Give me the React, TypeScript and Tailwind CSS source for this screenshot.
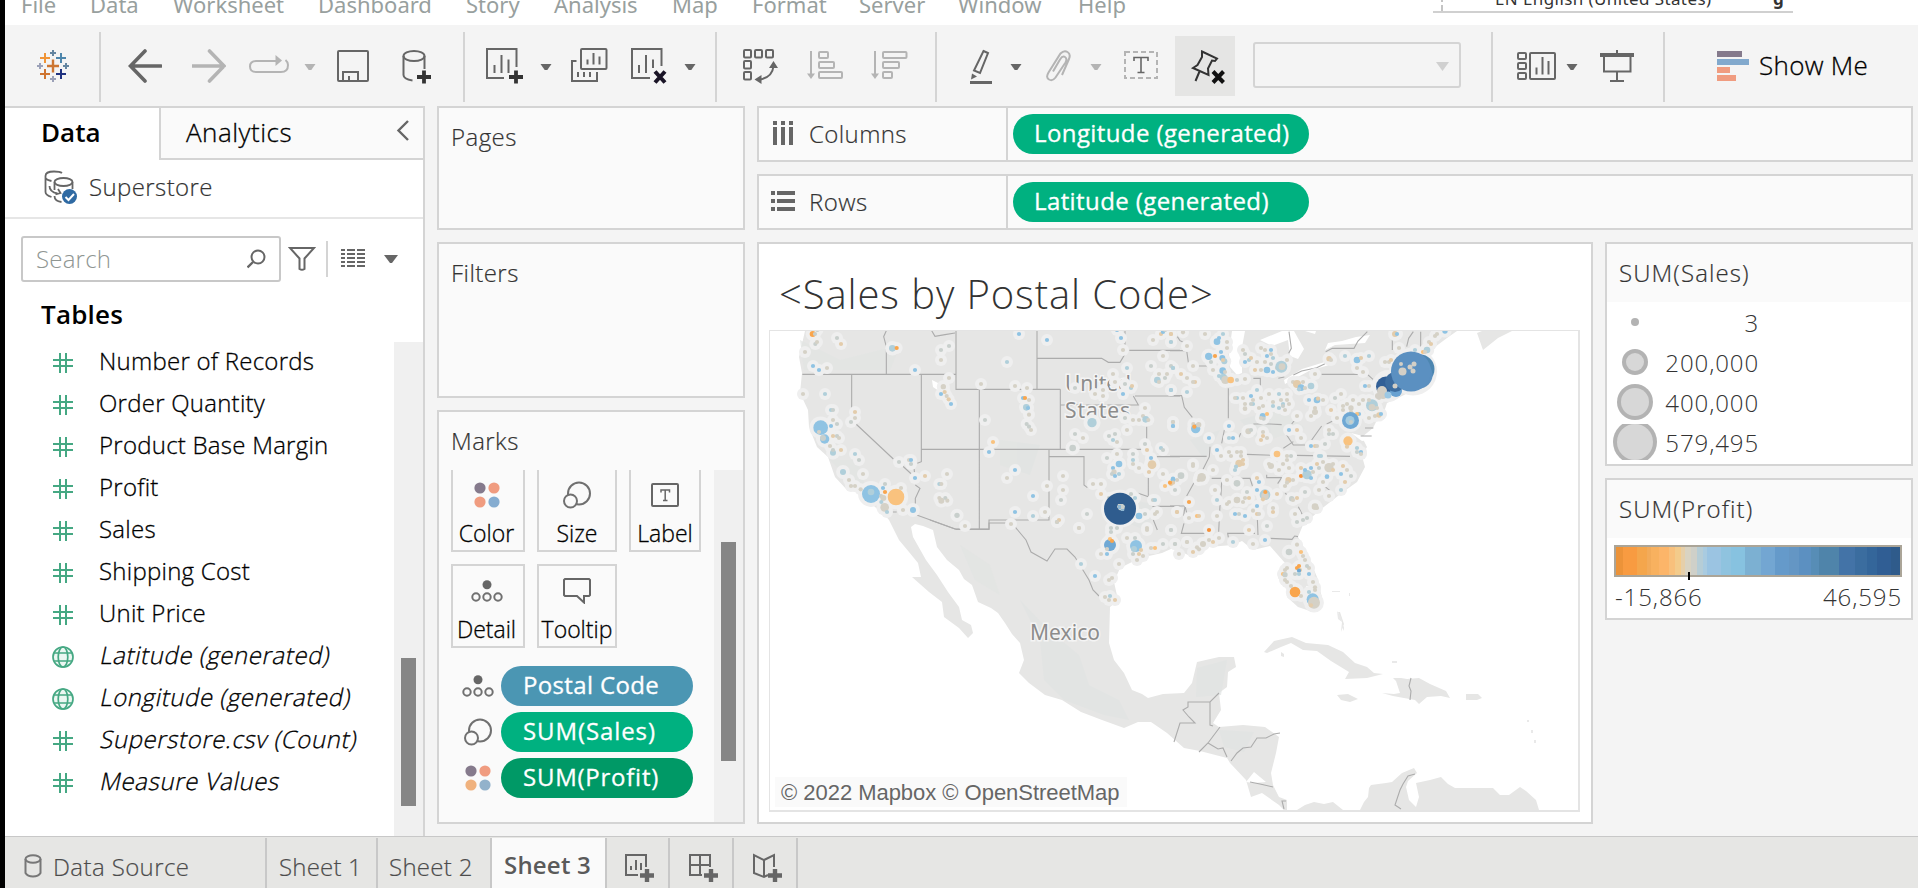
import type { ReactNode } from "react";

type IconProps = { x: number; y: number; w: number; h: number; className?: string; children: ReactNode };

function Icon({ x, y, w, h, className = "", children }: IconProps) {
  return (
    <svg
      width={w}
      height={h}
      viewBox={`${x} ${y} ${w} ${h}`}
      fill="none"
      stroke="#666"
      strokeWidth="2"
      className={`shrink-0 ${className}`}
    >
      {children}
    </svg>
  );
}

function Caret({ className = "", color = "#666" }: { className?: string; color?: string }) {
  return (
    <svg width="12" height="40" viewBox="0 0 12 40" className={`shrink-0 ${className}`}>
      <path d="M0.5 18h11l-4.2 6h-2.6z" fill={color} />
    </svg>
  );
}

function Rule({ className = "" }: { className?: string }) {
  return <div className={`-mt-[14px] h-[70px] w-[2px] shrink-0 bg-[#d4d4d4] ${className}`} />;
}

function MenuBar() {
  return (
    <div className="flex h-[25px] shrink-0 overflow-hidden bg-white text-[#98a09e]">
      <div className="-mt-[12px] flex h-[32px] text-[22px] leading-[32px] whitespace-nowrap font-['Noto_Sans',sans-serif]">
        <span className="ml-[16px] w-[69px]">File</span>
        <span className="w-[83px]">Data</span>
        <span className="w-[145px]">Worksheet</span>
        <span className="w-[148px]">Dashboard</span>
        <span className="w-[88px]">Story</span>
        <span className="w-[118px]">Analysis</span>
        <span className="w-[80px]">Map</span>
        <span className="w-[107px]">Format</span>
        <span className="w-[99px]">Server</span>
        <span className="w-[120px]">Window</span>
        <span className="w-[60px]">Help</span>
      </div>
      <div className="ml-[295px] h-[13px] w-[360px] overflow-hidden border-b-2 border-[#d0d0d0]">
        <div className="-mt-[13px] ml-[8px] flex h-[24px] border-l-2 border-dashed border-[#c4c4c4] text-[17px] leading-[24px] text-[#333] font-['Noto_Sans',sans-serif]">
          <span className="ml-[52px] w-[278px] tracking-[0.4px] whitespace-nowrap">EN English (United States)</span>
          <span className="font-bold">g</span>
        </div>
      </div>
    </div>
  );
}

function Plus({ x, y, c }: { x: number; y: number; c: string }) {
  return <path d={`M${x - 5} ${y}h10M${x} ${y - 5}v10`} stroke={c} strokeWidth="2" />;
}

function Toolbar() {
  return (
    <div className="flex h-[81px] shrink-0 items-start bg-[#f4f4f4] pt-[21px]">
      <Icon x={36} y={46} w={34} h={40} className="ml-[31px]">
        <path d="M47 66h12M53 59.5v13" stroke="#cd7632" strokeWidth="2.4" />
        <Plus x={45} y={58} c="#f09436" />
        <Plus x={61} y={58} c="#4d86ac" />
        <Plus x={45} y={74} c="#cf7430" />
        <Plus x={61} y={74} c="#1f3180" />
        <path d="M50 53h6M53 50v6M63 66h6M66 63v6" stroke="#6485a0" />
        <path d="M50 79h6M53 76v6M37 66h6M40 63v6" stroke="#9ba1b8" />
      </Icon>
      <Rule className="ml-[29px]" />
      <Icon x={128} y={46} w={34} h={40} className="ml-[27px]">
        <path d="M145 51 130.500 66l14.500 15M130.500 66H161" strokeWidth="3.600" strokeLinecap="round" />
      </Icon>
      <Icon x={192} y={46} w={34} h={40} className="ml-[30px]">
        <path d="M209.500 51l14.500 15-14.500 15M224 66h-31.500" stroke="#b4b4b4" strokeWidth="3.600" strokeLinecap="round" />
      </Icon>
      <Icon x={248} y={46} w={42} h={40} className="ml-[22px]">
        <path d="M278 61H256q-6 0-6 5.500t6 5.500h25q7 0 7-7 0-3-2.500-5" stroke="#b4b4b4" />
        <path d="M275.500 55l6.500 5.500-6.500 5.500z" fill="#b4b4b4" stroke="none" />
      </Icon>
      <Caret className="ml-[14px]" color="#b4b4b4" />
      <Icon x={336} y={46} w={34} h={40} className="ml-[20px]">
        <rect x="338" y="51" width="30" height="30" rx="1" />
        <path d="M343 81v-9h15v9M349 81v-5" />
      </Icon>
      <Icon x={402} y={46} w={30} h={40} className="ml-[32px]">
        <ellipse cx="414" cy="56" rx="10.500" ry="5" />
        <path d="M403.500 56v19q0 4 9 5.500M424.500 56v13" />
        <path d="M424 70.500v13M417 77h14" stroke="#333" strokeWidth="3.800" />
      </Icon>
      <Rule className="ml-[31px]" />
      <Icon x={485} y={46} w={40} h={40} className="ml-[20px]">
        <path d="M504 78h-17V49h29.500v18M494.500 73v-8M501.500 73V55M508.500 73V59.500" />
        <path d="M516 70.500v13M509 77h14" stroke="#333" strokeWidth="3.800" />
      </Icon>
      <Caret className="ml-[15px]" />
      <Icon x={570} y={46} w={38} h={40} className="ml-[18px]">
        <rect x="581" y="49" width="25.500" height="20" rx="1" />
        <path d="M587.500 64.500v-5M593.500 64.500V53M599.500 64.500V56.500M576.500 61H572v20h25v-9M578 77v-5M584 77v-5M590 77v-5" />
      </Icon>
      <Icon x={630} y={46} w={40} h={40} className="ml-[22px]">
        <path d="M650 78h-18V49h29.500v17M639 73v-8M646 73V55M653 68V59.500" />
        <path d="M655 71.500l10 11M665 71.500l-10 11" stroke="#1a1426" strokeWidth="4" />
      </Icon>
      <Caret className="ml-[14px]" />
      <Rule className="ml-[19px]" />
      <Icon x={742} y={46} w={38} h={40} className="ml-[25px]">
        <rect x="744" y="50" width="7" height="7.500" rx="1" />
        <rect x="755" y="50" width="7" height="7.500" rx="1" />
        <rect x="766" y="50" width="7" height="7.500" rx="1" />
        <rect x="744" y="61" width="7" height="7.500" rx="1" />
        <rect x="744" y="72" width="7" height="7.500" rx="1" />
        <path d="M773.500 66q-1 11-13 13.500" />
        <path d="M773.500 61l-4.500 7h9zM754.500 79.500l7-4.500v9z" fill="#666" stroke="none" />
      </Icon>
      <Icon x={806} y={46} w={38} h={40} className="ml-[26px]">
        <g stroke="#b4b4b4">
          <path d="M811 51v24" />
          <path d="M807 73.500h8l-4 5.500z" fill="#b4b4b4" stroke="none" />
          <rect x="819" y="52" width="9" height="6" rx="1" />
          <rect x="819" y="62" width="15" height="6" rx="1" />
          <rect x="819" y="72" width="23" height="6" rx="1" />
        </g>
      </Icon>
      <Icon x={870} y={46} w={38} h={40} className="ml-[26px]">
        <g stroke="#b4b4b4">
          <path d="M875 51v24" />
          <path d="M871 73.500h8l-4 5.500z" fill="#b4b4b4" stroke="none" />
          <rect x="883" y="52" width="23.500" height="6" rx="1" />
          <rect x="883" y="62" width="16" height="6" rx="1" />
          <rect x="883" y="72" width="9" height="6" rx="1" />
        </g>
      </Icon>
      <Rule className="ml-[27px]" />
      <Icon x={969} y={46} w={24} h={40} className="ml-[32px]">
        <path d="M983.500 51l4.500 2-8 20-6-2.500z" />
        <path d="M972 73.500l5 3-6 3zM970 81h22v3h-22z" fill="#666" stroke="none" />
      </Icon>
      <Caret className="ml-[17px]" />
      <Icon x={1045} y={46} w={26} h={40} className="ml-[23px]">
        <path
          d="M1062 75l7-16q2-5-1.500-7t-7 1.500l-12 19q-3 5 .5 7t6.500-2l10-15q2-4-.5-5.500t-5 2.500l-7 12"
          stroke="#b4b4b4"
        />
      </Icon>
      <Caret className="ml-[19px]" color="#b4b4b4" />
      <Icon x={1123} y={46} w={36} h={40} className="ml-[21px]">
        <rect x="1125" y="52" width="32" height="26" stroke="#b4b4b4" strokeDasharray="5 3" />
        <path d="M1134 61v-3.500h14v3.500M1141 57.500v15M1137.500 72.500h7" strokeWidth="1.600" />
      </Icon>
      <div className="-mt-[10px] ml-[16px] h-[60px] w-[60px] shrink-0 bg-[#e5e5e4] pt-[10px]">
        <Icon x={1175} y={46} w={60} h={40}>
          <path
            d="M1202 51.500l15 7-2 2.500-3-.5-4 8 .5 6.500-15.500-7 4.500-3 4.500-8zM1199.500 71.500l-4 9.500"
            stroke="#333"
          />
          <path d="M1213 71.500l10.500 11M1223.500 71.500l-10.500 11" stroke="#111" strokeWidth="4" />
        </Icon>
      </div>
      <div className="-mt-[4px] ml-[18px] flex h-[46px] w-[208px] shrink-0 justify-end rounded-[3px] border-2 border-[#d4d4d4] pr-[9px]">
        <svg width="15" height="42" viewBox="0 0 15 42">
          <path d="M1 18h13l-6.500 9z" fill="#d0d0d0" />
        </svg>
      </div>
      <Rule className="ml-[30px]" />
      <Icon x={1516} y={46} w={42} h={40} className="ml-[23px]">
        <rect x="1518" y="53" width="8" height="6" rx="1" />
        <rect x="1518" y="63" width="8" height="6" rx="1" />
        <rect x="1518" y="73" width="8" height="6" rx="1" />
        <rect x="1530" y="53" width="25" height="26" rx="1" />
        <path d="M1536.500 74.500v-7M1542.500 74.500V57M1548.500 74.500V61" />
      </Icon>
      <Caret className="ml-[8px]" />
      <Icon x={1599} y={46} w={36} h={40} className="ml-[21px]">
        <path d="M1600 53h34v4h-34zM1616 50h2v4h-2z" fill="#666" stroke="none" />
        <path d="M1604 56v15.500h26.500V56M1617 72v8M1610 81h14" />
      </Icon>
      <Rule className="ml-[28px]" />
      <Icon x={1717} y={46} w={33} h={40} className="ml-[52px]">
        <path d="M1717 51h25v6h-25z" fill="#857a8c" stroke="none" />
        <path d="M1717 59h32v6h-32z" fill="#82a9cd" stroke="none" />
        <path d="M1717 67h13v6h-13zM1717 75h19v6h-19z" fill="#f09c80" stroke="none" />
      </Icon>
      <span className="ml-[9px] text-[26px] leading-[38px] font-[350] tracking-[0.3px] whitespace-nowrap text-black [-webkit-text-stroke:0.3px]">
        Show Me
      </span>
    </div>
  );
}

function HashIcon() {
  return (
    <svg width="22" height="22" viewBox="0 0 22 22" stroke="#45a883" strokeWidth="2">
      <path d="M1 8h20M1 14h20M8 1v20M14 1v20" />
    </svg>
  );
}

function GlobeIcon() {
  return (
    <svg width="22" height="22" viewBox="0 0 22 22" stroke="#45a883" strokeWidth="1.700" fill="none">
      <circle cx="11" cy="11" r="10" fill="#ecf7f2" />
      <ellipse cx="11" cy="11" rx="4.800" ry="10" />
      <path d="M2 7h18M2 15h18" />
    </svg>
  );
}

const fields: { name: string; geo?: boolean; generated?: boolean }[] = [
  { name: "Number of Records" },
  { name: "Order Quantity" },
  { name: "Product Base Margin" },
  { name: "Profit" },
  { name: "Sales" },
  { name: "Shipping Cost" },
  { name: "Unit Price" },
  { name: "Latitude (generated)", geo: true, generated: true },
  { name: "Longitude (generated)", geo: true, generated: true },
  { name: "Superstore.csv (Count)", generated: true },
  { name: "Measure Values", generated: true },
];

function DataPane() {
  return (
    <div className="flex h-[730px] w-[420px] shrink-0 flex-col border-t-2 border-r-2 border-[#d4d4d4] bg-white">
      <div className="flex h-[52px] shrink-0">
        <div className="w-[154px] pl-[36px] text-[26px] leading-[48px] font-semibold text-black">Data</div>
        <div className="flex grow justify-between border-b-2 border-l-2 border-[#d4d4d4] bg-[#fafafa] pl-[25px] text-[26px] leading-[49px] font-[350] tracking-[0.5px] text-black [-webkit-text-stroke:0.3px]">
          Analytics
          <Icon x={394} y={118} w={16} h={24} className="mt-[10px] mr-[12px]">
            <path d="M407 121l-9.500 9.500 9.500 9.500" strokeWidth="2.400" />
          </Icon>
        </div>
      </div>
      <div className="flex h-[59px] shrink-0 items-start border-b-2 border-[#e6e6e6]">
        <Icon x={43} y={170} w={36} h={36} className="mt-[10px] ml-[38px]">
          <path d="M62 173q-2-1.500-8-1.500-8.500 0-8.500 4.500v16q0 3 6 5M45.500 178q1 2 6 3M49.500 186q0 6 8 7.500M58 189l2.500 4-5 1.500" strokeWidth="1.800" />
          <ellipse cx="63.500" cy="182" rx="9" ry="4" strokeWidth="1.800" />
          <path d="M54.500 182v8M72.500 182v7M54.500 196q0 5 7 6" strokeWidth="1.800" />
          <circle cx="69.500" cy="196.500" r="7.500" fill="#2f6aa3" stroke="none" />
          <path d="M65.500 197l3 3 5.500-6" stroke="#fff" strokeWidth="2" />
        </Icon>
        <span className="ml-[10px] text-[24px] leading-[54px] font-[350] tracking-[0.4px] text-[#333] [-webkit-text-stroke:0.2px]">
          Superstore
        </span>
      </div>
      <div className="mt-[17px] flex h-[46px] shrink-0 items-center">
        <div className="ml-[16px] flex h-[46px] w-[260px] items-center justify-between rounded-[3px] border-2 border-[#c8c8c8] pr-[12px] pl-[13px]">
          <span className="text-[24px] leading-[40px] font-light tracking-[0.2px] text-[#8f9693]">Search</span>
          <Icon x={248} y={249} w={20} h={20}>
            <circle cx="259" cy="257" r="6.500" />
            <path d="M254 262l-5.500 5.500" strokeWidth="2.400" />
          </Icon>
        </div>
        <Icon x={288} y={244} w={28} h={28} className="ml-[7px]">
          <path d="M290 247h24l-9.500 10.500V268q-2.500 1.500-5 0v-10.500z" />
        </Icon>
        <div className="ml-[10px] h-[36px] w-[2px] bg-[#d4d4d4]" />
        <svg width="24" height="18" viewBox="0 0 24 18" className="-mt-[2px] ml-[13px]" stroke="#666" strokeWidth="2">
          <path d="M0 1h4M6 1h8M16 1h8M0 5h4M6 5h8M16 5h8M0 9h4M6 9h8M16 9h8M0 13h4M6 13h8M16 13h8M0 17h4M6 17h8M16 17h8" />
        </svg>
        <svg width="14" height="8" viewBox="0 0 14 8" className="-mt-[1px] ml-[19px]">
          <path d="M0 0h14L8 8H6z" fill="#666" />
        </svg>
      </div>
      <div className="h-[60px] shrink-0 pl-[36px] text-[26px] leading-[65px] font-semibold tracking-[0.2px] text-black">Tables</div>
      <div className="flex grow">
        <div className="w-[389px] shrink-0">
          {fields.map((f) => (
            <div key={f.name} className="flex h-[42px] items-center">
              <span className="ml-[47px] w-[22px]">{f.geo ? <GlobeIcon /> : <HashIcon />}</span>
              <span
                className={`-mt-[5px] text-[24px] leading-[39px] font-[350] whitespace-nowrap text-black [-webkit-text-stroke:0.3px] ${f.generated ? "ml-[27px] inline-block -skew-x-12 tracking-[0.6px]" : "ml-[25px] tracking-[0.25px]"}`}
              >
                {f.name}
              </span>
            </div>
          ))}
        </div>
        <div className="grow bg-[#f0f0f0] pt-[316px] pl-[7px]">
          <div className="h-[148px] w-[15px] bg-[#868686]" />
        </div>
      </div>
    </div>
  );
}

function ColorDots({ third = "#f09c80", fourth = "#85acd0" }: { third?: string; fourth?: string }) {
  return (
    <svg width="26" height="26" viewBox="0 0 26 26">
      <circle cx="6" cy="6" r="5.600" fill="#857a8c" />
      <circle cx="20" cy="6" r="5.600" fill="#f09c80" />
      <circle cx="6" cy="20" r="5.600" fill={third} />
      <circle cx="20" cy="20" r="5.600" fill={fourth} />
    </svg>
  );
}

function SizeIcon() {
  return (
    <svg width="28" height="28" viewBox="0 0 28 28" fill="#fafafa" stroke="#707070" strokeWidth="2">
      <circle cx="16" cy="12.500" r="11" />
      <circle cx="7.500" cy="20" r="6.500" />
    </svg>
  );
}

function DetailIcon() {
  return (
    <svg width="32" height="22" viewBox="0 0 32 22" fill="none" stroke="#707070" strokeWidth="2">
      <circle cx="16" cy="4.700" r="4.500" fill="#666" stroke="none" />
      <circle cx="5" cy="17" r="3.700" />
      <circle cx="16" cy="17" r="3.700" />
      <circle cx="27" cy="17" r="3.700" />
    </svg>
  );
}

function LabelIcon() {
  return (
    <svg width="28" height="24" viewBox="0 0 28 24" fill="none" stroke="#666" strokeWidth="2">
      <rect x="1" y="1" width="26" height="22" rx="1" />
      <path d="M10 9.500V7h8.500v2.500M14.200 7v10.500M12 17.500h4.500" strokeWidth="1.500" />
    </svg>
  );
}

function TooltipIcon() {
  return (
    <svg width="28" height="26" viewBox="0 0 28 26" fill="none" stroke="#666" strokeWidth="2">
      <path d="M2 1h24l1 1v15l-1 1h-5v6.500l-7-6.500H2l-1-1V2z" />
    </svg>
  );
}

function MarkButton({ icon, label, className }: { icon: ReactNode; label: string; className: string }) {
  return (
    <div className={`flex flex-col items-center border-2 border-[#d4d4d4] ${className}`}>
      <div className="flex h-[30px] items-center">{icon}</div>
      <span className="mt-[7px] text-[23px] leading-[32px] font-[350] whitespace-nowrap text-black [-webkit-text-stroke:0.3px]">
        {label}
      </span>
    </div>
  );
}

function MarkRow({ icon, label, className }: { icon: ReactNode; label: string; className: string }) {
  return (
    <div className="flex h-[40px] items-center">
      <div className="flex w-[62px] shrink-0 justify-center pl-[16px]">{icon}</div>
      <div
        className={`h-[40px] w-[192px] rounded-full pl-[22px] text-[24px] leading-[38px] font-[450] whitespace-nowrap text-white [-webkit-text-stroke:0.3px] ${className}`}
      >
        {label}
      </div>
    </div>
  );
}

function Cards() {
  const title = "pl-[12px] text-[24px] leading-[58px] font-[350] tracking-[0.45px] text-[#333] [-webkit-text-stroke:0.2px]";
  return (
    <div className="ml-[12px] flex w-[308px] shrink-0 flex-col gap-[12px]">
      <div className={`h-[124px] border-2 border-[#d4d4d4] bg-[#fafafa] ${title}`}>Pages</div>
      <div className={`h-[156px] border-2 border-[#d4d4d4] bg-[#fafafa] ${title}`}>Filters</div>
      <div className="flex h-[414px] flex-col border-2 border-[#d4d4d4] bg-[#fafafa]">
        <div className={`h-[58px] shrink-0 ${title}`}>Marks</div>
        <div className="flex grow">
          <div className="w-[275px] shrink-0">
            <div className="flex pl-[12px]">
              <MarkButton className="h-[82px] w-[74px] border-t-0 pt-[10px] pr-[3px]" icon={<ColorDots />} label="Color" />
              <MarkButton className="ml-[12px] h-[82px] w-[80px] border-t-0 pt-[10px]" icon={<SizeIcon />} label="Size" />
              <MarkButton className="ml-[12px] h-[82px] w-[72px] border-t-0 pt-[10px]" icon={<LabelIcon />} label="Label" />
            </div>
            <div className="mt-[12px] flex pl-[12px]">
              <MarkButton className="h-[84px] w-[74px] pt-[10px] pr-[3px]" icon={<DetailIcon />} label="Detail" />
              <MarkButton className="ml-[12px] h-[84px] w-[80px] pt-[10px]" icon={<TooltipIcon />} label="Tooltip" />
            </div>
            <div className="mt-[18px] flex flex-col gap-[6px]">
              <MarkRow icon={<DetailIcon />} label="Postal Code" className="bg-[#4b96b3] tracking-[0.35px]" />
              <MarkRow icon={<SizeIcon />} label="SUM(Sales)" className="bg-[#00b180] tracking-[0.9px]" />
              <MarkRow icon={<ColorDots third="#f0b27e" fourth="#92b2cb" />} label="SUM(Profit)" className="bg-[#009966] tracking-[0.75px]" />
            </div>
          </div>
          <div className="grow bg-[#f0f0f0] pt-[72px] pl-[7px]">
            <div className="h-[219px] w-[15px] bg-[#868686]" />
          </div>
        </div>
      </div>
    </div>
  );
}

function Shelf({ icon, label, pill }: { icon: ReactNode; label: string; pill: string }) {
  return (
    <div className="flex h-[56px] shrink-0 border-2 border-[#d4d4d4] bg-[#fafafa]">
      <div className="flex w-[249px] shrink-0 items-center border-r-2 border-[#d4d4d4] pl-[11px]">
        {icon}
        <span className="ml-[13px] text-[24px] leading-[48px] font-[350] tracking-[0.4px] text-[#333] [-webkit-text-stroke:0.2px]">
          {label}
        </span>
      </div>
      <div className="mt-[6px] ml-[5px] h-[40px] w-[296px] rounded-full bg-[#00b180] pl-[21px] text-[24px] leading-[38px] font-[450] tracking-[0.4px] whitespace-nowrap text-white [-webkit-text-stroke:0.3px]">
        {pill}
      </div>
    </div>
  );
}

const palette: Record<string, string> = {
  g: "#d5d1c6",
  s: "#c8cfcc",
  b: "#8fc3e3",
  t: "#b0cfda",
  p: "#e3ccab",
  y: "#f9c27e",
  o: "#f9a54c",
  d: "#f5923a",
  c: "#6fa8d4",
};

/* Marks are listed as "x,y,colour[,radius]" in thirds of a pixel from each tile's corner. */
const westMarks =
  "188,312,o,9 195,312,s 202,300,s 196,342,s 201,336,g 261,324,s 273,342,p 165,366,g 189,408,b 207,420,b 231,414,g 159,492,g 225,492,t 427,355,t,10 440,354,o 495,420,b 573,360,s 597,348,s 573,390,g 597,444,g 580,470,g,8 573,492,b 584,486,p 590,498,g 596,508,p 603,522,b 693,462,g 771,396,t 807,312,b 891,330,b 795,468,g 831,474,g 819,504,b 825,504,o 837,510,g 829,532,t,10 834,534,b 837,554,g 830,582,s 837,590,s 843,600,g 705,570,s 729,636,y 717,666,b 315,546,p 315,564,g 303,576,s 243,540,t 249,540,s 249,570,g 261,582,s 243,588,b 212,593,b,22 207,606,g 224,627,b,14 219,624,s,9 249,618,p 261,618,s 267,624,g 240,648,g 249,668,t,9 249,660,s 273,660,p 315,672,t 327,690,s 279,726,t,9 297,750,g 339,732,g 303,768,g 315,768,g 332,778,g 447,696,s 477,690,g 483,690,b 483,702,s 495,744,b 525,738,p 591,732,g 568,762,t 574,762,g 568,804,g 574,812,g,9 586,804,s 592,812,g 795,720,b 771,744,g 849,798,b 795,846,b 849,858,t 621,856,s,8 645,888,g 783,882,g 885,846,g 891,768,g 939,738,g 939,780,g 933,810,s 921,876,t 927,870,p 987,894,g 1011,852,s 363,792,b,27 363,786,t,10 399,774,b 405,762,s 405,786,o 393,798,s 400,804,g,9 394,816,t 404,832,g,13 411,846,t 453,774,g 438,801,y,25 459,840,g 489,840,b,9 1113,324,b 1101,300,b 1119,360,g 1209,330,g 1233,312,p 1239,306,b 1263,312,p 1263,336,g 1245,300,s 1239,378,g 1203,408,s 1263,408,s 1269,414,t 1251,432,g 1227,432,g 1222,450,t,10 1227,456,g 1245,444,s 1263,480,b 1131,414,t 1089,432,g 1095,456,g 1059,480,g 1059,498,g 1035,492,g 975,474,s 1125,462,s 1143,474,t 1146,468,p 1119,492,b 1185,534,g 1179,558,g 1149,570,g 1167,570,g 1125,564,s 1187,568,t,10 1195,570,g 1026,578,t,14 1131,600,g 975,612,s 999,624,g 1095,612,s 1077,618,s 1089,630,t 1101,636,g 968,654,s,10 1185,642,s 1191,660,p 1233,654,t 1239,660,s 1269,576,t 1269,588,b 1101,672,g 1071,684,s 1149,672,s 1149,690,t 1149,702,g 1107,702,b,10 1089,714,b 1092,726,g,8 1086,732,s 1107,732,t 1095,738,b 1203,684,b 1206,704,p,13 1197,726,p 1167,714,g 1239,732,g 1269,746,b 1269,756,b 1263,762,p 1245,768,y 1281,750,g 1029,762,g 1053,762,g 1053,792,p 1155,804,t 1143,792,s 1167,858,b,10 1185,852,s 1209,810,s 1215,810,t 1215,852,g 1221,846,g 1281,846,p 1101,894,s 1191,894,g 1077,804,s";

const eastMarks =
  "3,102,p 39,97,g 3,126,t 51,138,g 105,102,g 147,114,b 141,125,b,10 159,102,t 171,126,g 171,144,g 153,156,b 116,169,b,11 135,168,o 123,186,s 157,174,b,9 163,184,t,9 159,180,p 69,198,g 9,204,t 33,222,p 51,234,g 75,246,p 69,246,g 3,270,t 51,276,t 129,210,g 158,212,b,10 165,216,g 147,228,t 160,232,t,11 166,240,g,12 182,240,y,10 201,240,s 225,237,g 219,150,g 225,162,s 225,186,b 237,180,t 243,174,p 273,144,g 285,150,g 303,150,b 303,162,g 291,168,b 309,174,t 261,186,g 285,186,g 303,192,s 255,210,p 273,210,g 291,210,b,10 321,204,g 334,200,t,18 336,200,g,10 351,180,g 309,216,b 261,270,t 243,288,b 201,294,t 195,294,g 219,294,g 225,312,g 225,326,g,7 249,312,t 243,312,s 249,300,g 267,324,g 297,282,g 273,294,g 279,318,g 309,306,g 309,318,t 327,324,t 327,282,t 351,282,g 351,300,g 333,300,g 339,312,t 345,330,g 357,312,g 339,318,s 369,246,g 381,252,p,12 393,263,b,10 387,268,t 405,264,g 423,258,t,10 399,246,g 435,222,g 477,176,p,8 483,180,g 525,168,t 561,180,b,10 573,174,p 597,168,t 561,204,g 579,216,g 597,258,g 585,258,b 278,348,b,9 291,342,y 281,356,s 273,354,g 381,348,g 495,294,s 513,282,g 549,300,g 441,300,b,10 417,300,b 444,296,p 459,300,g 435,324,g 435,336,g,9 423,348,g 483,330,p 519,318,g 531,312,g 519,330,g 543,324,g,8 543,336,g 567,312,g 579,300,g 501,354,g 567,342,b 561,342,y 77,386,b,14 70,372,g 86,374,g,8 73,380,o 9,366,g 9,378,b 177,378,b 117,414,b 177,414,t 189,414,b 235,394,g,9 243,390,s 141,450,b 153,468,g 279,396,g 279,408,p 291,414,g 273,420,p 357,390,b 381,390,p 393,414,g 477,390,g 477,402,s 489,402,s 465,432,s 423,438,b 435,438,p 441,438,g 321,462,y,10 351,468,g 363,468,s 351,480,g 339,492,g 357,504,g 177,456,g 201,456,g 213,456,g 213,468,g 183,468,g 219,480,p 207,490,p,11 219,492,p 198,500,t 195,510,t 69,492,g 69,498,g 129,510,g 33,527,s,10 9,538,b,7 9,548,p 15,570,s 0,548,o 95,532,g,13 86,540,g 171,540,g 201,550,s,10 261,534,p 267,546,b 303,498,g,9 297,492,g 327,510,g 355,540,p,9 351,548,g 369,540,g 345,558,g 393,528,d 393,504,p 411,524,t,14 405,510,b 423,534,b 423,504,b 429,516,g 441,492,p 447,468,t 453,468,t 459,486,g 447,504,s 477,503,g,14 489,510,p 489,492,g 471,530,b,7 459,546,g 519,498,p 513,522,b 531,510,g 543,528,s 525,546,p 513,570,t 477,588,g 447,570,g 405,576,s 135,570,g 141,600,t 57,606,o 21,636,p 57,654,g 81,648,y 87,648,p 141,648,g 3,690,s 117,690,d 237,690,p 177,606,g 171,612,g 201,600,g,10 231,576,s 225,594,g 237,594,p 219,606,g 261,570,b 285,584,t,16 285,588,g,11 286,576,o 279,598,p 321,582,p 261,618,b 249,632,g 261,642,p 267,642,g 309,624,g 309,636,p 195,642,b 207,642,s 225,648,b 365,596,s,8 369,600,g 381,594,p 375,642,g 381,666,s 399,660,s 411,654,s 435,620,g,10 441,624,g 291,678,s 285,720,b 249,732,g 189,726,t 147,714,g 129,726,p 117,720,g 99,732,g,9 81,742,g 87,748,g 69,756,p 51,726,g 27,762,g 15,732,g 381,734,g 357,756,s,10 393,756,y 399,768,g 405,780,g 387,798,o 381,804,o 390,810,p 387,812,c 375,822,s 387,822,t 417,804,g 411,798,s 417,822,b 351,804,g 345,810,g 339,822,y 345,824,s,8 345,840,g 351,846,g 429,846,g 435,862,g 435,870,g 363,858,g 375,876,o,16 393,888,g 417,876,t 428,898,b,18 418,904,b 432,908,g,18 423,916,p 534,423,y,14 531,440,p 561,444,t 561,456,s 573,456,b 573,462,g 606,316,t,18 606,322,g,10 597,300,g 597,354,g 615,348,g 627,345,p,8 633,342,b 621,324,g 627,294,g 645,186,g 657,186,g 663,180,p 675,102,p,9 681,102,b 687,144,g 735,150,t 759,156,y 771,150,t,10 765,156,g 777,126,g 783,132,p 795,108,g 801,102,g 825,93,b,8";

/* Texas and the Gulf coast, in whole pixels of the page. */
const southMarks =
  "1111,528,s 1111,532,s 1079,528,g 1110,545,c,6 1110,539,y 1112,541,o 1107,549,g 1101,554,g 1107,554,b 1127,538,g 1135,538,s 1136,546,b,6 1134,549,t,3 1141,550,p 1139,554,p 1143,556,g 1137,560,g 1133,554,s 1151,548,g 1155,548,y 1081,564,t 1119,564,g 1095,576,b 1112,578,g 1109,580,g 1105,597,g 1110,596,t 1109,600,g 1115,600,p 1147,530,g 1171,530,s 1163,544,s 1175,544,s 1187,542,g 1057,522,g";

type Mark = { x: number; y: number; fill: string; r: number };

function parse(list: string, ox: number, oy: number, unit: number): Mark[] {
  return list.split(" ").map((entry) => {
    const [x, y, c, r] = entry.split(",");
    const radius = r ? Number(r) * unit : 2.1;
    return { x: ox + Number(x) * unit, y: oy + Number(y) * unit, fill: palette[c], r: radius };
  });
}

const marks: Mark[] = [
  ...parse(westMarks, 750, 230, 1 / 3),
  ...parse(eastMarks, 1170, 300, 1 / 3),
  ...parse(southMarks, 0, 0, 1),
];

function MapView() {
  return (
    <svg width="808" height="479" viewBox="770 331 808 479" className="block">
      <g fill="#e6e6e5">
        <path d="M805 331L799 357 802 373 800 393 808 410 809 427 817 447 828 457 835 477 847 490 862 493 875 507 883 513 889 520 899 540 909 552 918 563 921 577 912 577 929 592 942 602 944 617 959 628 968 638 973 633 971 625 962 620 959 607 948 592 937 575 926 560 913 537 911 527 915 524 923 526 933 530 937 547 947 560 959 570 964 579 972 585 978 602 991 608 998 613 1005 623 1012 634 1020 643 1024 660 1019 673 1029 683 1045 695 1062 700 1081 712 1102 720 1124 728 1138 722 1151 722 1167 733 1184 748 1200 751 1227 758 1230 763 1246 780 1251 797 1262 793 1279 805 1284 810H1297L1305 805 1314 802 1324 804 1333 802 1343 810H1360L1364 802 1368 797 1369 788 1371 785 1386 783 1392 782 1402 773 1414 768 1417 773 1408 781 1406 787 1409 800 1416 807 1419 797 1416 783 1430 780 1441 777 1448 784 1455 788 1493 788 1500 795 1509 795 1520 787 1526 791 1536 800 1539 810H1287L1287 800 1279 797 1273 785 1271 773 1276 753 1279 737 1265 727 1243 725 1219 727 1213 723 1221 710 1219 693 1227 687 1228 672 1236 667 1234 657 1219 657 1197 662 1192 683 1184 693 1163 694 1148 698 1142 694 1132 690 1124 673 1114 660 1109 643 1110 607 1118 600 1114 582 1120 568 1140 558 1162 553 1173 548 1184 553 1192 557 1208 547 1233 545 1242 541 1253 550 1270 546 1285 563 1278 578 1287 587 1287 597 1298 607 1313 612 1323 602 1317 577 1307 553 1298 537 1303 525 1320 510 1343 492 1357 482 1365 467 1362 456 1367 447 1362 437 1373 428 1377 420 1383 415 1387 403 1400 397 1410 392 1433 377 1427 353 1447 338 1457 331z" />
        <path d="M1477 333l6 17 15-12 14-7h-30zM1264 652l10-11 18-4 14 6 22 2 15 7 12 11 12 4 7 6 9 1-16 4-22 1 4-7-18-11-14-10-14-1-12-7-10 4-14 6zM1337 695l11-1 10 5-8 3-9-2zM1382 693l12 1 6-1-4-12-3-3 8 0 6 1 12-1 11 6 16 7 4 7-9-2-14 1-8 7-4-4-22-4zM1466 694h12l4 4-5 2h-11zM1338 612l4 10-1 10 3-8-4-12zM1281 652l3 2 0 3-3-1z" />
      </g>
      {/* lowland tint */}
      <g fill="#e1e4e3" opacity="0.700">
        <path d="M1020 600l20 40 4 40 20 20 40 15 25 5-10-20-30-15-10-30-30-25zM1197 668l30-8-6 35-25 2zM1219 730l35 2-10 20-20-5zM800 340l40 20 60-15-10 25H804zM830 460l20 20 15 5-8-25zM1000 440l40 5-10 30-30-10zM960 545l30 20 10 30-25-15z" />
        <path d="M1240 420l40-12 25 20-45 15zM1190 440l30-10-15 30zM1130 500l30 5-15 25-20-8z" />
      </g>
      {/* great lakes and inland water */}
      <g fill="#fff">
        <path d="M1232 331h13l-3 16 0 26-5 2-7-8-1-14zM1260 340l22-9h12l10 18-6 10-8-3-2-16-16 6zM1284 380l18-11 26-8 1 4-20 6-24 13zM1325 350l10-5 30-2 5-8-14 2-14 4-14 2zM1305 331h11l-1 3zM1351 433l12 3 5 4-6 1z" />
        <path d="M932 380l6 3 1 8-6-4zM1306 586l4 0-2 5zM1246 782l8-10 12 10-12 1z" />
      </g>
      <g fill="none" stroke="#acacac" strokeWidth="1.100">
        <path d="M930 520L955 529H989V523H1014L1016 528 1026 540 1031 552 1047 561 1055 549H1067L1075 557 1089 580 1093 590 1099 596" />
        <path d="M1219 693l-9 9h-22v5l-5 3 6 7 6 6h-15l-6 19M1210 702v23l3 1M1220 727l-12 16-9 9M1208 743l10 6 5-1 4 9M1231 761l6-8 6-5 8-1 6-9 9 0 8-4 6-1M1250 782l10 2 13 3M1284 809l-2-8 4 0M1415 774l-7 2-5 8-3 6-2 6-3 9 6 4M1411 678l-2 8 2 5-1 9" />
        <g transform="translate(750 230) scale(.33333)" strokeWidth="3.300">
          <path d="M157 433H618M409 433V350l-8-30 8-18M305 433V540M318 582L430 687M458 708l26 24M514 433V695l-12 5M492 715l3 25M496 765l14 10-14 30 0 20M420 846h20M500 855L618 898M618 302V478H931M545 302l10 17 30-5 30-5M514 658H895M688 478V898M861 302V478M861 385H1055l20 12 35 0 15-25V302M931 478V658M931 525H1165L1150 498M895 658H1180M897 658V680H1002V765l10 8M897 680V870H717V898H618M1190 590V640M1195 740V800l-30-10M1138 361H1290M1155 498H1290M1220 680H1290M1207 829H1290M1210 870l12 30" />
        </g>
        <g transform="translate(1170 300) scale(.33333)" strokeWidth="3.300">
          <path d="M0 152H50l5 35 10 10M85 198h28M22 110l8 12 10 5M0 287H35l8 35 24 30M175 265V355M163 390l-8 40M120 440l-2 30-20 40M212 400l-5 12M250 235H271V310M325 235l18-4M455 223H592l17 15M0 469H110M230 463L340 467M380 466L540 469M125 535H155M185 535H240l8 25M290 524v9H335l-12 18M155 545l-3 55M150 615l-4 80M262 655l2 50M175 712l-2-12H255M300 715l66 3 8-10 10 2M72 548l-22 40M45 618l-4 30M42 670l-8 30H110M0 618H45l5 20M250 372h50l35 2M340 445l30-20M350 405l20 30 35 0M425 420l30-42M365 372l8-10M470 372l30-15M357 95l7 50-8 15M370 225l25-12 45-10 25-12M467 155l20-10h65l12-22 28-28M667 95v55M710 140l6-25 14-20M752 95v45M385 620l15 30M345 580l30 20M585 384h25M572 408h33M465 560l15 12" />
        </g>
      </g>
      <g fontFamily="'Noto Sans', sans-serif" fill="#8c8c8c" stroke="#f4f4f4" strokeWidth="3" style={{ paintOrder: "stroke" }} fontSize="21">
        <text x="1065" y="391" textLength="66">United</text>
        <text x="1065" y="418" textLength="65">States</text>
        <text x="1030" y="640" textLength="70">Mexico</text>
      </g>
      <g fill="#efefef">
        {marks.map((m, i) => (
          <circle key={i} cx={m.x} cy={m.y} r={m.r + 3.9} />
        ))}
        <circle cx="1120" cy="508.700" r="19" />
        <circle cx="1413" cy="371.500" r="24" />
        <circle cx="1388" cy="386" r="16" />
        <circle cx="1350" cy="420" r="12" />
      </g>
      {marks.map((m, i) => (
        <circle key={i} cx={m.x} cy={m.y} r={m.r} fill={m.fill} />
      ))}
      <circle cx="1120" cy="508.700" r="16" fill="#2f5c8e" />
      <path d="M1118 504h5l2 2-1 5-5-1-2-3z" fill="#c8cfcc" />
      <path d="M1118 505h3v4h-3zM1121 511h3v-2h-3z" fill="#8fb8d4" />
      <circle cx="1386" cy="386.500" r="10" fill="#315f96" />
      <circle cx="1396" cy="391" r="6" fill="#68a1d1" />
      <circle cx="1395" cy="382" r="10" fill="#3c6c9f" />
      <circle cx="1420" cy="369" r="14.500" fill="#4d86b0" />
      <circle cx="1419" cy="375" r="13.500" fill="#5a8fbf" />
      <circle cx="1411" cy="371.500" r="20" fill="#5b90c1" />
      <g fill="#d3cfc6">
        <circle cx="1402.500" cy="371.500" r="4" />
        <circle cx="1401" cy="364" r="2" />
        <circle cx="1410" cy="367" r="2.500" />
        <circle cx="1414" cy="364" r="2.500" />
        <circle cx="1413" cy="371" r="2.500" />
        <circle cx="1395" cy="386" r="2.500" />
        <circle cx="1382" cy="391" r="5" />
        <circle cx="1383" cy="395" r="4" />
        <circle cx="1378" cy="396" r="3" />
      </g>
      <circle cx="1388" cy="395" r="3.500" fill="#9cc8e4" />
      <circle cx="1350.500" cy="420.500" r="8.500" fill="#6fa8d4" />
      <circle cx="1350" cy="420.500" r="4.500" fill="#a5cce0" />
      <circle cx="1351" cy="422" r="2" fill="#c8cfcc" />
      <g fill="#e9e9e9">
        <path d="M1337 611l4 6 1 5-4-3zM1342 624l2 3v4l-2-4zM1332 591h8v1h-8zM1349 593h1v3h-1zM1527 720h2v2h-2zM1534 740h2v3h-2zM1531 730h2v3h-2zM1392 661h5v2h-5z" />
      </g>
    </svg>
  );
}

function Worksheet() {
  return (
    <div className="flex w-[836px] shrink-0 flex-col border-2 border-[#d4d4d4] bg-white">
      <div className="h-[86px] shrink-0 pl-[20px] text-[40px] leading-[99px] font-light tracking-[0.9px] whitespace-nowrap text-[#333]">
        &lt;Sales by Postal Code&gt;
      </div>
      <div className="relative ml-[10px] h-[482px] w-[811px] border border-r-2 border-b-2 border-[#e4e4e4]">
        <MapView />
        <div className="absolute bottom-[3px] left-[5px] h-[30px] w-[352px] bg-[#fafafa] pl-[6px] text-[22px] leading-[31px] tracking-[-0.03px] whitespace-nowrap text-[#666] font-['Liberation_Sans',sans-serif]">
          © 2022 Mapbox © OpenStreetMap
        </div>
      </div>
    </div>
  );
}

const ramp: [string, number][] = [
  ["#ec9339", 7], ["#f89b41", 14], ["#f4a64c", 10], ["#f2ab5a", 4], ["#f8b15f", 8], ["#fcb569", 10], ["#f8c07c", 6],
  ["#f3cb8b", 6], ["#e6cfa9", 4], ["#d9d3c2", 6], ["#cfd0c9", 6], ["#b6cdd6", 6], ["#a9cbe0", 4], ["#9bc4e2", 14],
  ["#8fc3df", 10], ["#87c2e0", 14], ["#7cb0d2", 16], ["#73a6d2", 14], ["#659aca", 14], ["#6496c4", 10], ["#5c90c1", 12],
  ["#578db6", 8], ["#4f84aa", 20], ["#4373a7", 16], ["#3b6d9f", 12], ["#34669a", 10], ["#305e94", 14], ["#2f5b8b", 9],
];

function Legends() {
  const title =
    "h-[58px] shrink-0 bg-[#fafafa] pl-[12px] text-[24px] leading-[58px] font-[350] tracking-[1.1px] text-[#333] [-webkit-text-stroke:0.2px]";
  const rows = [
    { label: "3", r: 4 },
    { label: "200,000", r: 13 },
    { label: "400,000", r: 18 },
    { label: "579,495", r: 22 },
  ];
  return (
    <div className="ml-[12px] flex w-[308px] shrink-0 flex-col gap-[12px]">
      <div className="h-[224px] border-2 border-[#d4d4d4] bg-white">
        <div className={title}>SUM(Sales)</div>
        {rows.map((row) => (
          <div key={row.label} className="flex h-[40px] items-center">
            <svg width="46" height="36" viewBox="0 0 46 36" className="ml-[5px]">
              <circle cx="23" cy="18" r={row.r} fill="#b3b3b3" />
              {row.r > 5 && <circle cx="23" cy="18" r={row.r - 4} fill="#d7d7d7" />}
            </svg>
            <span className="w-[101px] pt-[1px] text-right text-[24px] leading-[40px] font-light tracking-[0.9px] text-[#333]">{row.label}</span>
          </div>
        ))}
      </div>
      <div className="h-[142px] border-2 border-[#d4d4d4] bg-white">
        <div className={title}>SUM(Profit)</div>
        <div className="mt-[7px] ml-[7px] flex h-[32px] w-[288px] border-2 border-[#aba598]">
          {ramp.map(([color, w], i) => (
            <div key={i} style={{ backgroundColor: color, flexGrow: w }} />
          ))}
        </div>
        <div className="relative -mt-[5px] ml-[81px] h-[8px] w-[2px] bg-black" />
        <div className="flex justify-between pr-[9px] pl-[8px] text-[24px] leading-[33px] font-light tracking-[0.9px] text-[#333]">
          <span>-15,866</span>
          <span>46,595</span>
        </div>
      </div>
    </div>
  );
}

function TabAdd({ className, children }: { className: string; children: ReactNode }) {
  return (
    <div className={`flex h-[51px] shrink-0 border-r-2 border-[#c8c8c8] pt-[15px] ${className}`}>
      <svg width="32" height="31" viewBox="0 0 32 31" fill="none" stroke="#666" strokeWidth="2" className="shrink-0">
        {children}
        <path d="M23 16v13M16 22.500h14" strokeWidth="4.400" />
      </svg>
    </div>
  );
}

function SheetTabs() {
  return (
    <div className="flex h-[52px] shrink-0 border-t border-[#c8c8c8] bg-[#e6e6e4] pt-px text-[24px] leading-[58px] font-[350] whitespace-nowrap text-[#4c4c4c]">
      <div className="flex w-[262px] shrink-0 border-r-2 border-[#c8c8c8] pl-[19px]">
        <svg width="18" height="24" viewBox="0 0 18 24" fill="none" stroke="#777" strokeWidth="2" className="mt-[16px]">
          <ellipse cx="9" cy="5" rx="7.500" ry="3.800" />
          <path d="M1.500 5v14q2 3.500 7.500 3.500t7.500-3.500V5" />
        </svg>
        <span className="ml-[11px] tracking-[0.4px] [-webkit-text-stroke:0.2px]">Data Source</span>
      </div>
      <div className="w-[111px] shrink-0 border-r-2 border-[#c8c8c8] pl-[12px] tracking-[0.2px] [-webkit-text-stroke:0.2px]">Sheet 1</div>
      <div className="w-[114px] shrink-0 border-r-2 border-[#c8c8c8] pl-[11px] tracking-[0.3px] [-webkit-text-stroke:0.2px]">Sheet 2</div>
      <div className="w-[115px] shrink-0 border-r-2 border-[#c8c8c8] bg-[#fafafa] pl-[12px] leading-[54px] font-semibold tracking-[0.2px] text-[#5a5a5a]">Sheet 3</div>
      <TabAdd className="w-[63px] pl-[17px]">
        <path d="M14 22H2V2h20v12M7 17v-4M12 17V7M17 17V10" />
      </TabAdd>
      <TabAdd className="w-[64px] pl-[18px]">
        <path d="M14 22H2V2h20v12M12 2v20M2 12h20" />
      </TabAdd>
      <TabAdd className="w-[64px] pl-[18px]">
        <path d="M12 24V7L2 2v18l10 4 4-2M12 7l10-5v12" />
      </TabAdd>
    </div>
  );
}

export default function App() {
  return (
    <div className="flex h-[888px] w-[1918px] flex-col overflow-hidden border-l-[5px] border-black bg-[#f4f4f4] font-['Open_Sans',sans-serif]">
      <MenuBar />
      <Toolbar />
      <div className="flex h-[730px] shrink-0">
        <DataPane />
        <Cards />
        <div className="ml-[12px] flex w-[1156px] flex-col gap-[12px]">
          <Shelf
            label="Columns"
            pill="Longitude (generated)"
            icon={
              <svg width="26" height="24" viewBox="0 0 26 24" fill="#666" className="-mt-[3px]">
                <path d="M3 0h4v4H3zM11 0h4v4h-4zM19 0h4v4h-4zM3 6h4v18H3zM11 6h4v18h-4zM19 6h4v18h-4z" />
              </svg>
            }
          />
          <Shelf
            label="Rows"
            pill="Latitude (generated)"
            icon={
              <svg width="26" height="24" viewBox="0 0 26 24" fill="#666" className="-mt-[3px]">
                <path d="M1 2h4v4H1zM7 2h18v4H7zM1 10h4v4H1zM7 10h18v4H7zM1 18h4v4H1zM7 18h18v4H7z" />
              </svg>
            }
          />
          <div className="flex">
            <div className="flex h-[582px]">
              <Worksheet />
            </div>
            <Legends />
          </div>
        </div>
      </div>
      <SheetTabs />
    </div>
  );
}
